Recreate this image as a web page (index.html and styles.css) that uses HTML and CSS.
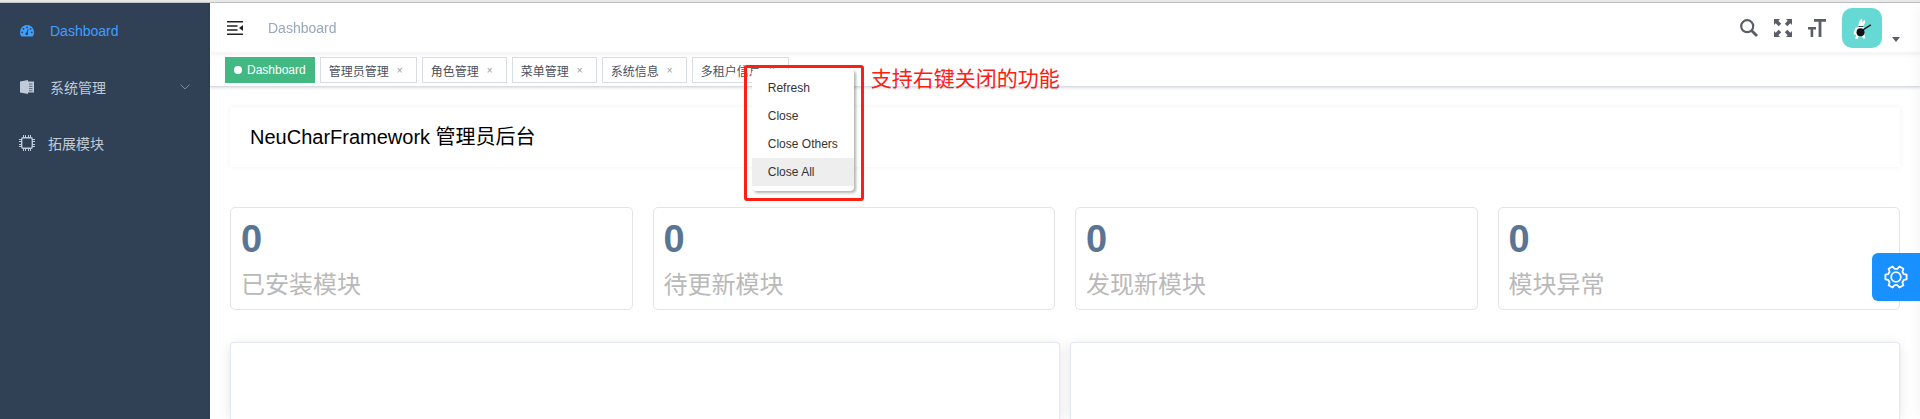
FILE: index.html
```html
<!DOCTYPE html>
<html lang="zh-CN">
<head>
<meta charset="utf-8">
<title>NeuCharFramework 管理员后台</title>
<link rel="stylesheet" href="styles.css">
</head>
<body>
<div class="app">
  <aside class="sidebar">
    <nav>
      <a class="menu-item active" href="#">
        <svg class="menu-icon" viewBox="0 0 14 14"><path fill="currentColor" d="M7 1a7 7 0 0 0-7 7c0 1.500.4 2.900 1 4 .2.300.4.500.8.500h10.400c.4 0 .6-.2.800-.5.600-1.100 1-2.500 1-4a7 7 0 0 0-7-7z"/><g fill="#304156"><circle cx="2.200" cy="8.300" r="0.900"/><circle cx="3.500" cy="4.900" r="0.900"/><circle cx="7" cy="3.300" r="0.900"/><circle cx="10.500" cy="4.900" r="0.900"/><circle cx="11.800" cy="8.300" r="0.900"/><circle cx="6.800" cy="9.800" r="1.400"/><path d="M6.300 9.500 7.700 5l.8.200-1 4.600z"/></g></svg>
        <span>Dashboard</span>
      </a>
      <a class="menu-item" href="#">
        <svg class="menu-icon" viewBox="0 0 14 14"><path fill="currentColor" d="M0 1.500 8 0v14L0 12.500zM8 1.500h6v11H8z"/><path stroke="#304156" stroke-width=".7" d="M9 4h3.500M9 6.300h3.500M9 8.600h3.500M9 10.800h3.500"/></svg>
        <span>系统管理</span>
        <svg class="menu-arrow" viewBox="0 0 10 6"><path fill="none" stroke="currentColor" d="m.5.500 4.500 4.500L9.500.500"/></svg>
      </a>
      <a class="menu-item module" href="#">
        <svg class="menu-icon chip" viewBox="0 0 16 16"><rect x="2.700" y="2.700" width="10.600" height="10.600" rx="1.500" fill="none" stroke="currentColor" stroke-width="1.400"/><path stroke="currentColor" stroke-width="1" d="M4.500 0v3M6.500 0v3M9.500 0v3M11.500 0v3M4.500 13v3M6.500 13v3M9.500 13v3M11.500 13v3M0 4.500h3M0 6.500h3M0 9.500h3M0 11.500h3M13 4.500h3M13 6.500h3M13 9.500h3M13 11.500h3"/></svg>
        <span>拓展模块</span>
      </a>
    </nav>
  </aside>
  <div class="main">
    <header class="navbar">
      <button class="icon-button" type="button" aria-label="Toggle menu">
        <svg width="16" height="14" viewBox="0 0 16 14"><path stroke="#222" stroke-width="1.500" d="M0 .8h16M0 5h10.500M0 9h10.500M0 13.200h16"/><path d="M16 4v6l-4-3z" fill="#222"/></svg>
      </button>
      <span class="breadcrumb">Dashboard</span>
      <div class="tools">
        <button class="icon-button" type="button" aria-label="Search">
          <svg width="18" height="18" viewBox="0 0 18 18" fill="none" stroke="currentColor"><circle cx="7.200" cy="7.200" r="6" stroke-width="2.200"/><path stroke-width="2.800" d="m11.500 11.500 5.500 5.500"/></svg>
        </button>
        <button class="icon-button" type="button" aria-label="Fullscreen">
          <svg width="18" height="18" viewBox="0 0 18 18" fill="currentColor"><path id="corner" d="M0 0h6L4.300 1.700l2.900 3-2.500 2.500-3-2.900L0 6z"/><use href="#corner" transform="rotate(90 9 9)"/><use href="#corner" transform="rotate(180 9 9)"/><use href="#corner" transform="rotate(270 9 9)"/></svg>
        </button>
        <button class="icon-button" type="button" aria-label="Font size">
          <svg width="18" height="18" viewBox="0 0 18 18" fill="currentColor"><path d="M6 0h12v2.800h-4.600V18h-2.800V2.800H6zM0 8h8v2.500H5.200V18H2.600v-7.500H0z"/></svg>
        </button>
        <button class="user" type="button" aria-label="User menu">
          <svg class="avatar" viewBox="0 0 40 40"><path fill="#fff" d="M16.500 17.500c0-3 1.500-6 3.300-6.500 1 .8.600 2.600.3 4 .8-1.800 2-3.200 3-2.800.6 1.600-.6 4-1.600 5.300 1 1.200.8 2.800-.3 3.700l1.300 5 .8 4.300h-2.100l-1.500-3.200-2.700.2-1.200 3.300h-2.600l1-3.800-2.700-.8.500-2.200 1.300-4.300 2.700-.5z"/><circle cx="18.500" cy="24.300" r="4" fill="#111"/><path d="m20 22.500 8.800-5.700" stroke="#111" stroke-width="1.400"/><path d="M16.500 18.500h5" stroke="#345"/></svg>
          <svg class="caret" width="8" height="5" viewBox="0 0 8 5"><path fill="#5a5e66" d="M0 0h8L4 5z"/></svg>
        </button>
      </div>
    </header>
    <nav class="tags">
      <a class="tag current" href="#">Dashboard</a>
      <a class="tag" href="#">管理员管理<span class="close">×</span></a>
      <a class="tag" href="#">角色管理<span class="close">×</span></a>
      <a class="tag" href="#">菜单管理<span class="close">×</span></a>
      <a class="tag" href="#">系统信息<span class="close">×</span></a>
      <div class="tag-anchor">
        <a class="tag" href="#">多租户信息<span class="close">×</span></a>
        <div class="highlight">
          <div class="context-menu">
            <button type="button">Refresh</button>
            <button type="button">Close</button>
            <button type="button">Close Others</button>
            <button class="hovered" type="button">Close All</button>
          </div>
          <span class="note">支持右键关闭的功能</span>
        </div>
      </div>
    </nav>
    <main class="content">
      <h1 class="title">NeuCharFramework 管理员后台</h1>
      <section class="stats">
        <div class="stat"><strong>0</strong><span>已安装模块</span></div>
        <div class="stat"><strong>0</strong><span>待更新模块</span></div>
        <div class="stat"><strong>0</strong><span>发现新模块</span></div>
        <div class="stat"><strong>0</strong><span>模块异常</span></div>
      </section>
      <section class="panels">
        <div class="panel"></div>
        <div class="panel"></div>
      </section>
    </main>
  </div>
</div>
<div class="drawer-edge"></div>
<button class="settings" type="button" aria-label="Settings">
  <svg width="24" height="24" viewBox="-12 -12 24 24" fill="none" stroke="#fff" stroke-width="1.800" stroke-linejoin="round"><path d="M10.600-2.300v4.600L7.900 2.800 6.400 5.300l1 2.900-4 2.300-2-2.300h-2.800l-2 2.300-4-2.300 1-2.900-1.500-2.500-2.700-.5v-4.600l2.700-.5 1.500-2.500-1-2.900 4-2.300 2 2.300h2.800l2-2.300 4 2.300-1 2.900 1.500 2.500z"/><circle r="4.800"/></svg>
</button>
</body>
</html>
```
FILE: styles.css
```css
* {
  box-sizing: border-box;
}

body {
  margin: 0;
  height: 100vh;
  overflow: hidden;
  background: #fff;
  border-top: 2px solid #e8e8e8;
  font-family: "Liberation Sans", "Noto Sans CJK SC", sans-serif;
  font-size: 14px;
}

a {
  color: inherit;
  text-decoration: none;
}

button {
  padding: 0;
  border: 0;
  background: none;
  color: inherit;
  font: inherit;
}

svg {
  display: block;
}

.app {
  display: flex;
  height: 100%;
  border-top: 1px solid #c4c4c4;
}

.sidebar {
  flex: 0 0 210px;
  background: #304156;
  color: #bfcbd9;
}

.menu-item {
  display: flex;
  align-items: center;
  gap: 16px;
  height: 56px;
  padding: 0 20px;
}

.menu-item.active {
  color: #409eff;
}

.menu-icon {
  width: 14px;
  height: 14px;
}

.menu-icon.chip {
  width: 16px;
  height: 16px;
}

.menu-item.module {
  gap: 13px;
  padding-left: 19px;
}

.menu-arrow {
  width: 10px;
  height: 6px;
  margin-left: auto;
  color: #7c899a;
}

.main {
  display: flex;
  flex: 1;
  flex-direction: column;
  min-width: 0;
}

.navbar {
  position: relative;
  z-index: 1;
  display: flex;
  align-items: center;
  flex: none;
  height: 50px;
  padding: 0 20px 0 17px;
  box-shadow: 0 1px 4px rgba(0, 21, 41, 0.08);
}

.breadcrumb {
  margin-left: 25px;
  color: #97a8be;
}

.tools {
  display: flex;
  align-items: center;
  gap: 16px;
  margin-left: auto;
  color: #5a5e66;
}

.user {
  display: flex;
  align-items: flex-end;
  gap: 10px;
}

.avatar {
  width: 40px;
  height: 40px;
  border-radius: 10px;
  background: #66d9d4;
}

.caret {
  margin-bottom: 6px;
}

.tags {
  display: flex;
  align-items: flex-start;
  flex: none;
  gap: 5px;
  height: 34px;
  padding: 4px 15px 0;
  border-bottom: 1px solid #d8dce5;
  background: #fff;
  box-shadow: 0 1px 3px rgba(0, 0, 0, 0.12), 0 0 3px rgba(0, 0, 0, 0.04);
}

.tag {
  display: flex;
  align-items: center;
  height: 26px;
  padding: 0 8px;
  border: 1px solid #d8dce5;
  background: #fff;
  color: #495060;
  font-size: 12px;
}

.tag.current {
  border-color: #42b983;
  background: #42b983;
  color: #fff;
}

.tag.current::before {
  content: "";
  width: 8px;
  height: 8px;
  margin-right: 5px;
  border-radius: 50%;
  background: #fff;
}

.close {
  width: 16px;
  margin-left: 3px;
  color: #999;
  font-size: 10px;
  text-align: center;
}

.tag-anchor {
  position: relative;
}

.highlight {
  position: absolute;
  z-index: 2;
  top: 8px;
  left: 52px;
  width: 120px;
  padding: 1px 7px 7px 5px;
  border: 3px solid #fc2012;
  border-radius: 3px;
}

.context-menu {
  padding: 5px 0;
  border-radius: 4px;
  background: #fff;
  color: #333;
  font-size: 12px;
  box-shadow: 2px 2px 3px rgba(0, 0, 0, 0.3);
}

.context-menu button {
  display: block;
  width: 100%;
  height: 28px;
  padding: 0 16px;
  text-align: left;
  white-space: nowrap;
}

.context-menu .hovered {
  background: #eee;
}

.note {
  position: absolute;
  top: -4px;
  left: 124px;
  color: #fc2012;
  font-size: 21px;
  line-height: 30px;
  white-space: nowrap;
}

.content {
  display: flex;
  flex: 1;
  flex-direction: column;
  padding: 20px 20px 0;
}

.title {
  margin: 0 0 40px;
  padding: 0 20px;
  font-size: 20px;
  font-weight: 400;
  line-height: 60px;
  box-shadow: 0 0 5px rgba(0, 0, 0, 0.06);
}

.stats {
  display: grid;
  grid-template-columns: repeat(4, 1fr);
  gap: 20px;
  margin-bottom: 32px;
}

.stat {
  display: flex;
  flex-direction: column;
  gap: 7px;
  padding: 10px 10px 6px;
  border: 1px solid #e4e4e4;
  border-radius: 5px;
}

.stat strong {
  color: #5a7593;
  font-size: 38px;
  line-height: 42px;
}

.stat span {
  color: #b9b9b9;
  font-size: 24px;
  line-height: 36px;
}

.panels {
  display: grid;
  flex: 1;
  grid-template-columns: repeat(2, 1fr);
  gap: 10px;
}

.panel {
  border: 1px solid #e4e8f4;
  border-bottom: 0;
  border-radius: 4px 4px 0 0;
  background: #fff;
  box-shadow: 0 2px 12px rgba(0, 0, 0, 0.1);
}

.drawer-edge {
  position: fixed;
  top: 3px;
  bottom: 0;
  left: 100%;
  width: 260px;
  box-shadow: 0 0 15px rgba(0, 0, 0, 0.05);
}

.settings {
  position: fixed;
  top: 253px;
  right: 0;
  display: grid;
  place-items: center;
  width: 48px;
  height: 48px;
  border-radius: 6px 0 0 6px;
  background: #1890ff;
}
```
